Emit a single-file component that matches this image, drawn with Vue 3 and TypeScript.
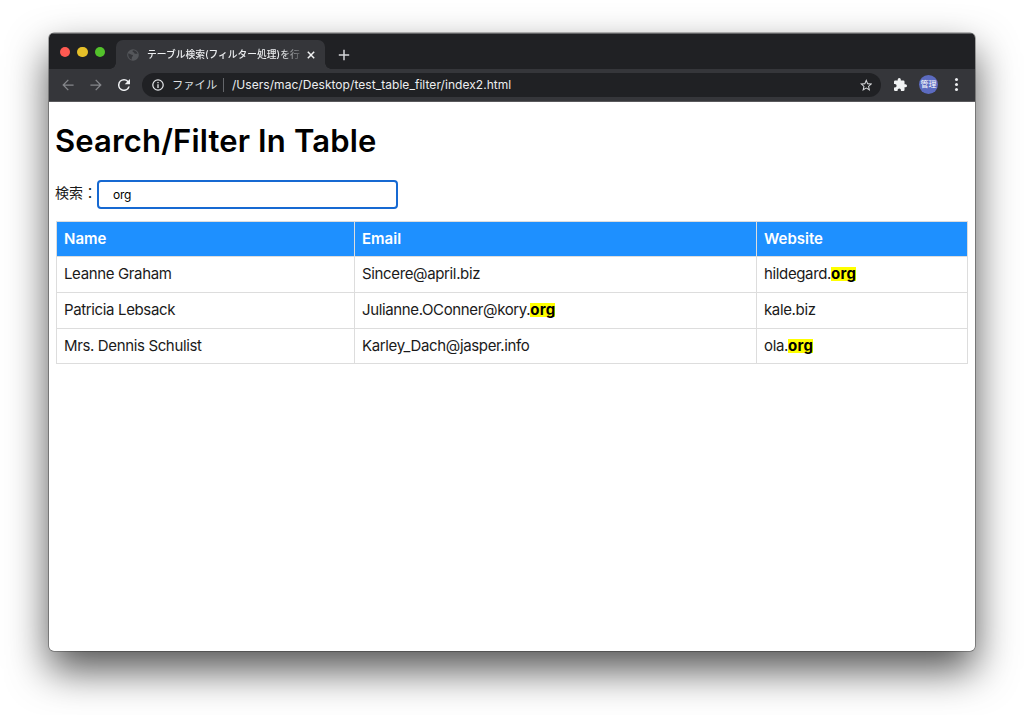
<script setup lang="ts">
import { computed, ref } from 'vue'

interface User {
  name: string
  email: string
  website: string
}

const query = ref('org')
const users: User[] = [
  { name: 'Leanne Graham', email: 'Sincere@april.biz', website: 'hildegard.org' },
  { name: 'Patricia Lebsack', email: 'Julianne.OConner@kory.org', website: 'kale.biz' },
  { name: 'Mrs. Dennis Schulist', email: 'Karley_Dach@jasper.info', website: 'ola.org' },
]

// Splits a cell into alternating plain and matched pieces.
function pieces(text: string) {
  const q = query.value
  if (!q) return [{ text, hit: false }]
  return text
    .split(q)
    .flatMap((part, i) => (i ? [{ text: q, hit: true }, { text: part, hit: false }] : [{ text: part, hit: false }]))
    .filter((p) => p.text)
}

const rows = computed(() =>
  users
    .filter((u) => !query.value || Object.values(u).some((v) => v.includes(query.value)))
    .map((u) => [u.name, u.email, u.website].map(pieces)),
)
</script>

<template>
  <div class="desktop">
    <div class="window">
      <div class="tabstrip">
        <div class="lights"><i class="red"></i><i class="yellow"></i><i class="green"></i></div>
        <div class="tab">
          <svg class="globe" viewBox="0 0 12 12" width="12" height="12">
            <circle cx="6" cy="6" r="5.8" fill="#54565a" />
            <path d="M1.2 4.6C3 4.4 3.2 5.6 4.8 5.7C6.2 5.8 6.4 7 5.4 7.6C4.6 8 5 9.4 4.6 10.7C2.2 10 .9 7.6 1.2 4.6ZM6 1.2C5.2 2.2 5.6 3 6.6 3.2C7.4 3.4 7 4.6 8 4.8C9 5 9.6 4.4 10.6 4.8C10 2.6 8.2 1.2 6 1.2Z" fill="#35363a" />
          </svg>
          <span class="title">テーブル検索(フィルター処理)を行</span>
          <svg class="close" viewBox="0 0 8 8" width="8" height="8"><path d="M.8.8 7.2 7.2M7.2.8.8 7.2" stroke="#f1f2f3" stroke-width="1.5" /></svg>
        </div>
        <svg class="plus" viewBox="0 0 12 12" width="12" height="12"><path d="M6 .8V11.2M.8 6H11.2" stroke="#d3d5d8" stroke-width="1.5" /></svg>
      </div>
      <div class="toolbar">
        <svg class="arrow" viewBox="0 0 12 12" width="12" height="12"><path d="M11.6 6H1.2M6.3.9 1.2 6 6.3 11.1" fill="none" stroke="#85878b" stroke-width="1.25" /></svg>
        <svg class="arrow fwd" viewBox="0 0 12 12" width="12" height="12"><path d="M.4 6H10.8M5.7.9 10.8 6 5.7 11.1" fill="none" stroke="#85878b" stroke-width="1.25" /></svg>
        <svg class="reload" viewBox="4 4 16 16" width="12" height="12"><path d="M17.65 6.35A7.96 7.96 0 0 0 12 4a8 8 0 1 0 7.73 10h-2.08A6 6 0 1 1 12 6c1.66 0 3.14.69 4.22 1.78L13 11h7V4z" fill="#eceef0" /></svg>
        <div class="omnibox">
          <svg class="info" viewBox="0 0 12 12" width="12" height="12"><circle cx="6" cy="6" r="5.2" fill="none" stroke="#e4e6e9" stroke-width="1.25" /><path d="M6 5.3V9M6 3V4.3" stroke="#e4e6e9" stroke-width="1.3" /></svg>
          <span class="scheme">ファイル</span>
          <span class="bar"></span>
          <span class="url">/Users/mac/Desktop/test_table_filter/index2.html</span>
          <svg class="star" viewBox="2 2 20 19" width="12.5" height="12"><path d="M22 9.24l-7.19-.62L12 2 9.19 8.63 2 9.24l5.46 4.73L5.82 21 12 17.27 18.18 21l-1.63-7.03L22 9.24zM12 15.4l-3.76 2.27 1-4.28-3.32-2.88 4.38-.38L12 6.1l1.71 4.04 4.38.38-3.32 2.88 1 4.28L12 15.4z" fill="#d5d7da" /></svg>
        </div>
        <svg class="puzzle" viewBox="2 1 21 21" width="13" height="13"><path d="M20.5 11H19V7a2 2 0 0 0-2-2h-4V3.5a2.5 2.5 0 0 0-5 0V5H4a2 2 0 0 0-1.99 2v3.8H3.5a2.7 2.7 0 0 1 0 5.4H2V20a2 2 0 0 0 2 2h3.8v-1.5a2.7 2.7 0 0 1 5.4 0V22H17a2 2 0 0 0 2-2v-4h1.5a2.5 2.5 0 0 0 0-5z" fill="#f1f3f4" /></svg>
        <span class="avatar">管理</span>
        <span class="menu"><i></i><i></i><i></i></span>
      </div>
      <main class="page">
        <h1>Search/Filter In Table</h1>
        <div class="search">
          <label for="q">検索：</label>
          <input id="q" v-model="query" type="text" />
        </div>
        <div class="grid">
          <div class="row head"><div>Name</div><div>Email</div><div>Website</div></div>
          <div v-for="(row, r) in rows" :key="r" class="row">
            <div v-for="(cell, c) in row" :key="c"><template v-for="(p, i) in cell" :key="i"><mark v-if="p.hit">{{ p.text }}</mark><span v-else>{{ p.text }}</span></template></div>
          </div>
        </div>
      </main>
    </div>
  </div>
</template>

<style>
body {
  margin: 0;
  background: #fff;
  overflow: hidden;
}
</style>

<style scoped>
* {
  box-sizing: border-box;
}
svg {
  display: block;
  flex: none;
}
.desktop {
  height: 715px;
  padding: 33px 48px 0 49px;
  overflow: hidden;
  background: #fff;
}
.window {
  width: 926px;
  height: 618px;
  border-radius: 5px;
  background: #fff;
  box-shadow: 0 0 0 0.6px rgba(0, 0, 0, 0.5), 0 19px 40px rgba(0, 0, 0, 0.68);
  overflow: hidden;
  font-family: Inter, "Noto Sans CJK JP", sans-serif;
}
.tabstrip {
  height: 36px;
  display: flex;
  background: #202124;
  border-top: 1px solid #626365;
}
.lights {
  display: flex;
  gap: 7px;
  padding: 12.5px 0 0 10.5px;
  width: 67px;
}
.lights i {
  width: 10.5px;
  height: 10.5px;
  border-radius: 50%;
}
.red { background: #ff5a52; }
.yellow { background: #e6c029; }
.green { background: #53c22b; }
.tab {
  position: relative;
  width: 209px;
  height: 29px;
  margin-top: 6px;
  padding: 0 10px 0 11px;
  display: flex;
  align-items: center;
  background: #35363a;
  border-radius: 7px 7px 0 0;
}
.tab::before,
.tab::after {
  content: "";
  position: absolute;
  bottom: 0;
  width: 6px;
  height: 6px;
}
.tab::before {
  left: -6px;
  background: radial-gradient(circle at 0 0, transparent 5.5px, #35363a 6px);
}
.tab::after {
  right: -6px;
  background: radial-gradient(circle at 100% 0, transparent 5.5px, #35363a 6px);
}
.title {
  margin-left: 8px;
  white-space: nowrap;
  font-size: 9.75px;
  font-weight: 500;
  line-height: 14px;
  color: #eceef0;
  -webkit-mask-image: linear-gradient(90deg, #000 132px, transparent 158px);
  mask-image: linear-gradient(90deg, #000 132px, transparent 158px);
}
.close {
  margin-left: auto;
}
.plus {
  margin: 15px 0 0 13px;
}
.toolbar {
  height: 33px;
  padding: 0 17px 1px 13px;
  display: flex;
  align-items: center;
  background: #35363a;
  border-bottom: 1px solid #59595c;
}
.fwd { margin-left: 15.5px; }
.reload { margin-left: 16px; }
.omnibox {
  width: 739px;
  height: 24px;
  margin-left: 12.5px;
  padding: 0 9px 0 11px;
  display: flex;
  align-items: center;
  border-radius: 12px;
  background: #202124;
  white-space: nowrap;
}
.info { margin-left: -1px; }
.scheme {
  width: 45px;
  margin-left: 8px;
  font-size: 11.3px;
  line-height: 16px;
  color: #dfe1e4;
}
.bar {
  width: 1px;
  height: 14px;
  margin-left: 6px;
  background: #64666a;
}
.url {
  margin-left: 8px;
  padding-top: 1px;
  font-size: 12px;
  line-height: 16px;
  letter-spacing: 0.05px;
  color: #eceef0;
}
.star { margin-left: auto; }
.puzzle { margin-left: 13px; }
.avatar {
  width: 19px;
  height: 19px;
  margin-left: 12px;
  border-radius: 50%;
  background: #5c6bc0;
  color: #fff;
  font-size: 8px;
  line-height: 19px;
  text-align: center;
}
.menu {
  display: flex;
  flex-direction: column;
  gap: 2px;
  margin-left: auto;
}
.menu i {
  width: 3px;
  height: 3px;
  border-radius: 50%;
  background: #eceef0;
}
.page {
  padding: 19px 7px 0;
  color: #1a1a1a;
}
h1 {
  margin: 0 0 0 -1px;
  height: 40px;
  font-size: 31px;
  font-weight: 600;
  line-height: 40px;
  letter-spacing: 0.15px;
  white-space: nowrap;
  color: #000;
}
.search {
  display: flex;
  height: 29px;
  margin-top: 19px;
}
label {
  width: 42px;
  margin-left: -1px;
  flex: none;
  font-size: 14px;
  line-height: 25px;
  white-space: nowrap;
}
input {
  width: 301px;
  height: 29px;
  padding: 0 14px;
  border: 2px solid #1669d2;
  border-radius: 4px;
  outline: none;
  background: #fff;
  color: #000;
  font: 12px Inter, sans-serif;
  letter-spacing: -0.3px;
}
.grid {
  width: 912px;
  margin-top: 12px;
  border-top: 1px solid #ddd;
  border-left: 1px solid #ddd;
  font-size: 15px;
}
.row {
  display: grid;
  grid-template-columns: 298px 402px 211px;
  height: 35.8px;
  line-height: 34px;
  border-bottom: 1px solid #ddd;
  letter-spacing: -0.36px;
}
.row > div {
  padding-left: 7px;
  border-right: 1px solid #ddd;
  white-space: nowrap;
}
.head {
  height: 35px;
  background: #1e90ff;
  color: #fff;
  font-weight: 600;
  letter-spacing: 0;
}
mark {
  padding: 0;
  background: #ff0;
  color: #000;
  font-weight: 700;
  display: inline-block;
  height: 14px;
  line-height: 14px;
  letter-spacing: 0.25px;
}
</style>
